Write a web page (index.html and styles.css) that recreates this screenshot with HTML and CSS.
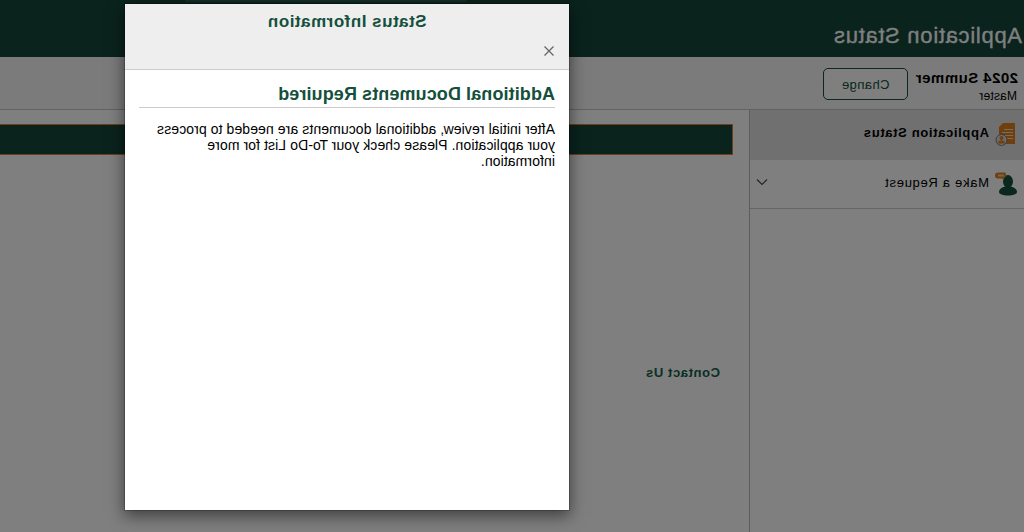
FILE: index.html
```html
<!DOCTYPE html>
<html lang="en">
<head>
<meta charset="utf-8">
<title>Application Status</title>
<link rel="stylesheet" href="styles.css">
</head>
<body>
<div class="page">
  <header class="topbar">
    <h1 class="topbar-title">Application Status</h1>
    <div class="topbar-strip"></div>
  </header>
  <section class="termbar">
    <div class="term">
      <div class="term-name">2024 Summer</div>
      <div class="term-level">Master</div>
    </div>
    <button class="change-btn" type="button">Change</button>
  </section>
  <div class="main">
    <nav class="sidebar">
      <a class="nav-item nav-active">
        <svg class="nav-icon" viewBox="0 0 24 26" width="24" height="26">
          <path fill="#e07f1f" d="M3 1h12l4 4v17H3z"/>
          <path fill="#f4d9b8" d="M5 7h9v1H5zM5 10h11v1H5zM5 13h11v1H5zM5 16h6v1H5z"/>
          <circle cx="16.500" cy="18" r="5.500" fill="#d9d9d9" stroke="#777" stroke-width="1"/>
          <circle cx="16.500" cy="16" r="2" fill="#e07f1f"/>
          <path fill="#e07f1f" d="M13 21.500c0-2.500 1.500-3.300 3.500-3.300s3.500.8 3.500 3.300z"/>
        </svg>
        <span>Application Status</span>
      </a>
      <a class="nav-item">
        <svg class="nav-icon" viewBox="0 0 24 26" width="24" height="26">
          <path fill="#14503c" d="M1 21c0-3.500 4-5.500 9-5.500s9 2 9 5.500c0 2-4 3.500-9 3.500s-9-1.500-9-3.500z"/>
          <ellipse cx="10" cy="10.500" rx="5" ry="6.500" fill="#14503c"/>
          <path fill="#e07f1f" d="M13 1.500h7c2 0 3 1.200 3 3s-1 3-3 3h-4l-2 2 .3-2.300C12.800 6.800 12 5.800 12 4.500c0-1.800.5-3 1-3z"/>
          <rect x="14" y="3.500" width="6" height="2" fill="#e8c9a5"/>
        </svg>
        <span class="nav-label">Make a Request</span>
        <svg class="chevron" viewBox="0 0 12 8" width="12" height="8"><path d="M1 1.500l5 5 5-5" fill="none" stroke="#444" stroke-width="1.100"/></svg>
      </a>
    </nav>
    <main class="content">
      <div class="alert"></div>
      <a class="contact">Contact Us</a>
    </main>
  </div>
  <div class="backdrop"></div>
  <div class="modal">
    <div class="modal-head">
      <h2 class="modal-title">Status Information</h2>
      <div class="modal-close-row">
        <svg class="modal-close" viewBox="0 0 12 12" width="12" height="12"><path d="M1.500 1.500l9 9M10.500 1.500l-9 9" stroke="#666" stroke-width="1.300" fill="none"/></svg>
      </div>
    </div>
    <div class="modal-body">
      <h3 class="modal-subtitle">Additional Documents Required</h3>
      <p class="modal-text">After initial review, additional documents are needed to process your application. Please check your To-Do List for more information.</p>
    </div>
  </div>
</div>
</body>
</html>
```
FILE: styles.css
```css
* { box-sizing: border-box; }
html, body { margin: 0; height: 100%; overflow: hidden; }
body { background: #fff; font-family: "Liberation Sans", Arial, sans-serif; color: #000; }
.page { position: relative; width: 1024px; height: 532px; overflow: hidden; transform: scaleX(-1); background: #fff; display: flex; flex-direction: column; }
.topbar { position: relative; height: 57px; flex: none; background: #14463a; display: flex; align-items: flex-end; padding: 0 0 9px 2px; }
.topbar-title { margin: 0; font-size: 22px; line-height: 24px; font-weight: 400; letter-spacing: .7px; color: #fff; -webkit-text-stroke: .3px #fff; }
.topbar-strip { position: absolute; left: 557px; top: 0; width: 282px; height: 2px; background: rgba(255,255,255,.1); }
.termbar { height: 53px; flex: none; background: #f7f7f7; border-bottom: 1px solid #c4c4c4; display: flex; padding: 11px 0 0 6px; }
.term { width: 110px; }
.term-name { font-size: 15px; line-height: 19px; font-weight: 700; letter-spacing: .45px; }
.term-level { font-size: 12px; line-height: 19px; letter-spacing: .2px; margin-left: 1px; }
.change-btn { width: 85px; height: 32px; background: #fff; border: 1px solid #14503c; border-radius: 5px; color: #14503c; font: 13px "Liberation Sans", Arial, sans-serif; letter-spacing: .4px; }
.main { flex: 1; display: flex; min-height: 0; }
.sidebar { width: 275px; flex: none; background: #fff; border-right: 1px solid #bbb; }
.nav-item { display: flex; align-items: center; gap: 5px; height: 50px; padding: 0 6px 4px 6px; font-size: 13px; letter-spacing: .7px; border-bottom: 1px solid #ccc; }
.nav-active { background: #e0e0e0; font-weight: 700; letter-spacing: .65px; border-bottom: 0; padding-bottom: 6px; }
.nav-item:nth-child(2) { height: 49px; }
.nav-icon { flex: none; margin-bottom: -4px; }
.nav-active .nav-icon { margin-bottom: -6px; }
.nav-label { flex: 1; }
.content { flex: 1; padding-top: 14px; display: flex; flex-direction: column; align-items: flex-start; }
.alert { width: 733px; margin-left: 16px; height: 31px; background: #14463a; border: 1px solid #dc7c32; border-right: 0; }
.contact { margin: 210px 0 0 29px; color: #14604a; font-size: 13px; font-weight: 700; letter-spacing: .6px; }
.backdrop { position: absolute; inset: 0; background: rgba(0,0,0,.5); }
.modal { position: absolute; left: 454px; top: 3px; width: 446px; height: 508px; background: #fff; border: 1px solid rgba(0,0,0,.2); background-clip: padding-box; box-shadow: 0 5px 15px rgba(0,0,0,.5); display: flex; flex-direction: column; }
.modal-head { height: 66px; background: #eee; border-bottom: 1px solid #ccc; flex: none; }
.modal-title { margin: 0; padding-top: 8px; text-align: center; font-size: 17px; line-height: 20px; font-weight: 700; letter-spacing: .5px; color: #14503c; }
.modal-close-row { padding: 13px 0 0 14px; line-height: 0; }
.modal-body { padding: 13px 14px 0; }
.modal-subtitle { margin: 0 0 13px; padding-bottom: 2px; border-bottom: 1px solid #ccc; font-size: 18px; line-height: 22px; font-weight: 700; letter-spacing: .1px; color: #14503c; }
.modal-text { margin: 0; font-size: 14px; line-height: 16px; letter-spacing: .09px; }
```
